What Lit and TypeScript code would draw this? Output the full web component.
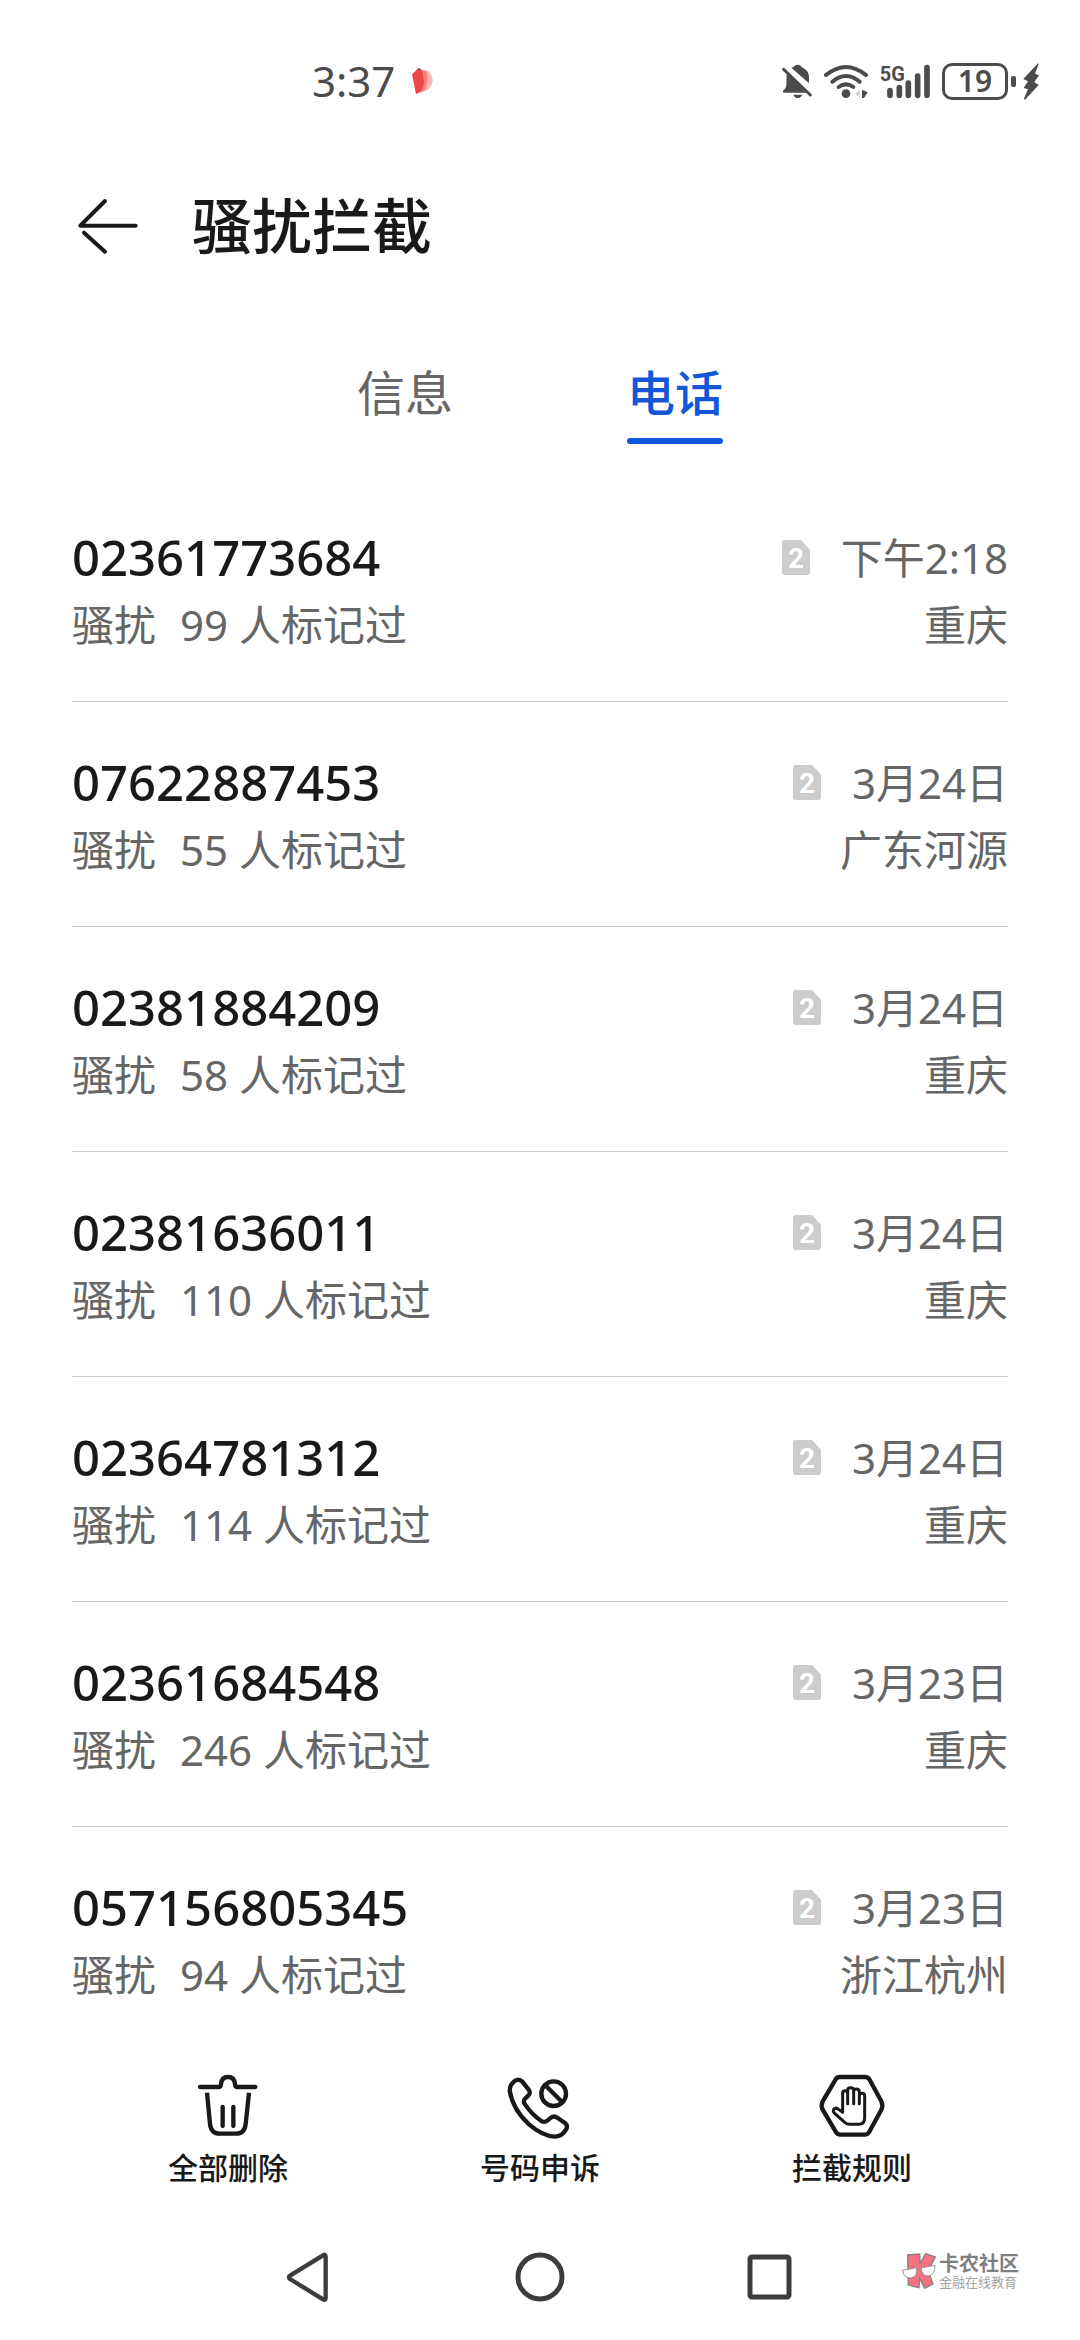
import { LitElement, html, css, svg } from "lit";
import { customElement, property, state } from "lit/decorators.js";
import { classMap } from "lit/directives/class-map.js";

interface BlockedCall {
  number: string;
  marks: number;
  time: string;
  place: string;
}

const CALLS: BlockedCall[] = [
  { number: "02361773684", marks: 99, time: "下午2:18", place: "重庆" },
  { number: "07622887453", marks: 55, time: "3月24日", place: "广东河源" },
  { number: "02381884209", marks: 58, time: "3月24日", place: "重庆" },
  { number: "02381636011", marks: 110, time: "3月24日", place: "重庆" },
  { number: "02364781312", marks: 114, time: "3月24日", place: "重庆" },
  { number: "02361684548", marks: 246, time: "3月23日", place: "重庆" },
  { number: "057156805345", marks: 94, time: "3月23日", place: "浙江杭州" },
];

const base = css`
  :host {
    display: block;
    font-family: "Noto Sans", "Noto Sans CJK SC", sans-serif;
  }
  * {
    box-sizing: border-box;
  }
  button {
    margin: 0;
    padding: 0;
    border: 0;
    background: none;
    color: inherit;
    font: inherit;
    cursor: pointer;
  }
  svg {
    display: block;
    flex: none;
  }
`;

@customElement("status-bar")
export class StatusBar extends LitElement {
  static styles = [
    base,
    css`
      .bar {
        display: flex;
        align-items: center;
        justify-content: space-between;
        height: 162px;
        padding: 0 41px 0 312px;
        color: #4b4b4b;
      }
      .left,
      .right {
        display: flex;
        align-items: center;
      }
      .left {
        gap: 16px;
        font-size: 42px;
        line-height: 60px;
      }
      .right {
        gap: 12px;
      }
      .power {
        display: flex;
        align-items: center;
        gap: 3px;
      }
      .battery {
        display: flex;
        align-items: center;
        justify-content: center;
        width: 66px;
        height: 37px;
        border: 3px solid #4b4b4b;
        border-radius: 10px;
        font-size: 30px;
        font-weight: 600;
        line-height: 32px;
      }
      .tip {
        width: 5px;
        height: 11px;
        border-radius: 2px;
        background: #4b4b4b;
      }
      .bolt {
        margin-left: 4px;
      }
      .net {
        font-family: Roboto, sans-serif;
        font-size: 60px;
        font-weight: 700;
      }
    `,
  ];

  render() {
    return html`
      <div class="bar">
        <div class="left">
          <span>3:37</span>
          <svg width="22" height="28" viewBox="363 78 66 84">
            <path d="M395 88 L412 88 Q428 102 428 120 Q424 140 408 150 L384 156 Z" fill="#f9b3b3" />
            <path d="M390 84 L408 90 Q416 108 410 128 L404 148 L380 158 Z" fill="#f58080" />
            <path d="M366 100 L387 80 L398 92 L402 125 L396 148 L378 160 Z" fill="#f04848" />
            <path d="M380 88 L387 80 L394 89 Z" fill="#a84a4a" />
          </svg>
        </div>
        <div class="right">
          <svg width="30" height="36" viewBox="66 66 90 108" fill="currentColor">
            <path d="M94 80 Q102 78 104 74 Q113 68 122 74 Q124 78 130 81 Q147 90 147 108 L147 127 Z" />
            <path d="M80 94 L141 155 L70 155 Q66 150 74 145 Q79 140 79 132 Z" />
            <path d="M100 161 L127 161 Q122 171 113 171 Q104 171 100 161 Z" />
            <path d="M71 85 L151 162" stroke="currentColor" stroke-width="9" stroke-linecap="round" />
          </svg>
          <svg width="44" height="36" viewBox="192 66 132 108" fill="none" stroke="currentColor" stroke-width="12" stroke-linecap="round">
            <path d="M198 102 Q258 54 318 102" />
            <path d="M217 122 Q258 88 299 122" />
            <path d="M236 138 Q258 122 280 138" />
            <circle cx="258" cy="158" r="13" fill="currentColor" stroke="none" />
            <path d="M299 147 L299 169 L285 158 Z" fill="#cfcfcf" stroke="none" />
            <path d="M306 146 L323 154 L312 171 L306 171 Z" fill="currentColor" stroke="none" />
          </svg>
          <svg width="50" height="36" viewBox="360 66 150 108" stroke="currentColor" stroke-width="17" stroke-linecap="round">
            <path d="M390 149 V163 M418 140 V163 M445 126 V163 M473 105 V163 M501 80 V163" />
            <text class="net" x="359" y="121" stroke="none" fill="currentColor">5G</text>
          </svg>
          <div class="power">
            <span class="battery">19</span>
            <span class="tip"></span>
            <svg class="bolt" width="16" height="37" viewBox="787 65 48 111" fill="currentColor">
              <path d="M832 66 L788 113 L802 120 L789 140 L802 144 L789 174 L793 175 L834 131 L821 122 L835 102 L823 97 L834 68 Z" />
            </svg>
          </div>
        </div>
      </div>
    `;
  }
}

@customElement("call-row")
export class CallRow extends LitElement {
  static styles = [
    base,
    css`
      .row {
        display: flex;
        flex-direction: column;
        padding: 47px 0 43px;
        border-bottom: 1px solid #cccccc;
      }
      .row.last {
        border-bottom-color: transparent;
      }
      .line {
        display: flex;
        align-items: center;
        justify-content: space-between;
        height: 67px;
        font-size: 42px;
        line-height: 67px;
        color: #666666;
        white-space: nowrap;
      }
      .number {
        font-size: 49px;
        font-weight: 500;
        color: #191919;
      }
      .when {
        display: flex;
        align-items: center;
        gap: 31px;
      }
      .tag {
        display: flex;
        gap: 24px;
      }
      .sim {
        font-family: Roboto, sans-serif;
        font-size: 84px;
        font-weight: 700;
      }
    `,
  ];

  @property({ attribute: false }) call!: BlockedCall;
  @property({ type: Boolean }) last = false;

  render() {
    const { number, marks, time, place } = this.call;
    return html`
      <div class=${classMap({ row: true, last: this.last })}>
        <div class="line">
          <span class="number">${number}</span>
          <span class="when">
            <svg width="28" height="35" viewBox="126 88 84 105">
              <path d="M134 88 H183 L210 117 V185 Q210 193 202 193 H134 Q126 193 126 185 V96 Q126 88 134 88 Z" fill="#cccccc" />
              <text class="sim" x="168" y="172" text-anchor="middle" fill="#ffffff">2</text>
            </svg>
            <span>${time}</span>
          </span>
        </div>
        <div class="line">
          <span class="tag"><span>骚扰</span><span>${marks} 人标记过</span></span>
          <span>${place}</span>
        </div>
      </div>
    `;
  }
}

const trashIcon = svg`
  <path d="M180 111 H237 Q243 111 243 102 Q245 81 264 81 Q283 81 285 102 Q285 111 291 111 H346" />
  <path d="M201 128 L210 222 Q213 251 240 251 H288 Q314 251 317 222 L327 128" stroke-linecap="butt" />
  <path d="M248 171 V228 M280 171 V228" />
`;

const phoneIcon = svg`
  <path d="M149 122 Q149 104 164 93 Q177 84 187 95 L206 119 Q213 128 205 137 L195 146 Q188 154 195 163 Q215 193 244 213 Q254 219 263 211 L273 203 Q282 196 292 203 L315 219 Q325 227 318 239 Q306 260 284 260 Q248 258 207 223 Q158 179 149 122 Z" />
  <circle cx="281" cy="131" r="37" />
  <path d="M255 105 L307 157" />
`;

const handIcon = svg`
  <path d="M210 81 H285 Q293 81 298 88 L334 154 Q340 167 334 179 L298 245 Q293 254 285 254 H210 Q202 254 197 245 L158 179 Q152 167 158 154 L197 88 Q202 81 210 81 Z" />
  <path stroke-width="9" d="M218 187 V130 Q218 122 225 122 Q233 122 233 130 V161 V121 Q233 113 242 113 Q251 113 251 121 V161 V124 Q251 117 259 117 Q268 117 268 126 V161 V137 Q268 130 276 130 Q284 130 284 138 V204 Q284 222 266 223 H239 Q231 223 225 218 L194 190 Q186 182 193 176 Q199 172 206 178 L218 187" />
`;

const ACTIONS = [
  { label: "全部删除", icon: trashIcon, box: "156 60 216 216" },
  { label: "号码申诉", icon: phoneIcon, box: "132 60 216 216" },
  { label: "拦截规则", icon: handIcon, box: "138 60 216 216" },
];

@customElement("action-bar")
export class ActionBar extends LitElement {
  static styles = [
    base,
    css`
      .bar {
        display: flex;
        padding: 18px 72px 26px;
        color: #191919;
      }
      .action {
        display: flex;
        flex: 1;
        flex-direction: column;
        align-items: center;
        gap: 6px;
        font-size: 30px;
        font-weight: 500;
        line-height: 40px;
      }
    `,
  ];

  render() {
    return html`
      <div class="bar">
        ${ACTIONS.map(
          (a) => html`
            <button class="action">
              <svg width="72" height="72" viewBox=${a.box} fill="none" stroke="currentColor" stroke-width="13" stroke-linecap="round" stroke-linejoin="round">
                ${a.icon}
              </svg>
              <span>${a.label}</span>
            </button>
          `
        )}
      </div>
    `;
  }
}

@customElement("nav-bar")
export class NavBar extends LitElement {
  static styles = [
    base,
    css`
      .bar {
        position: relative;
        display: flex;
        align-items: center;
        justify-content: center;
        gap: 170px;
        height: 126px;
        color: #3c3c3c;
      }
      .mark {
        position: absolute;
        right: 61px;
        bottom: 51px;
        display: flex;
        align-items: center;
        gap: 3px;
      }
      .words {
        display: flex;
        flex-direction: column;
      }
      .name {
        font-size: 20px;
        font-weight: 700;
        line-height: 22px;
        color: #808080;
      }
      .motto {
        font-size: 13px;
        line-height: 14px;
        color: #a2a2a2;
      }
    `,
  ];

  render() {
    return html`
      <nav class="bar">
        <button aria-label="返回">
          <svg width="60" height="60" viewBox="30 50 180 180" fill="none" stroke="currentColor" stroke-width="13" stroke-linejoin="round">
            <path d="M159 75 Q167 70 167 79 V202 Q167 211 159 207 L60 146 Q53 141 60 136 Z" />
          </svg>
        </button>
        <button aria-label="主页">
          <svg width="60" height="60" viewBox="0 0 60 60" fill="none" stroke="currentColor" stroke-width="5">
            <circle cx="30" cy="30" r="22" />
          </svg>
        </button>
        <button aria-label="最近任务">
          <svg width="60" height="60" viewBox="0 0 60 60" fill="none" stroke="currentColor" stroke-width="5">
            <rect x="10" y="10" width="39" height="40" rx="2" />
          </svg>
        </button>
        <div class="mark">
          <svg width="34" height="36" viewBox="60 67 102 108">
            <path d="M77 73 L113 70 L114 98 L131 69 L160 79 L138 120 L153 160 L128 173 L113 143 L111 171 L79 163 Z" fill="#f4717f" stroke="#8b8080" stroke-width="4" />
            <path d="M61 119 L104 111 Q107 137 88 142 Q67 145 61 119 Z" fill="#ffffff" stroke="#9a9090" stroke-width="3" />
            <path d="M117 112 L159 104 Q160 131 140 136 Q120 137 117 112 Z" fill="#ffffff" stroke="#9a9090" stroke-width="3" />
            <path d="M104 115 Q111 110 118 114" fill="none" stroke="#9a9090" stroke-width="3" />
          </svg>
          <div class="words">
            <span class="name">卡农社区</span>
            <span class="motto">金融在线教育</span>
          </div>
        </div>
      </nav>
    `;
  }
}

@customElement("app-root")
export class AppRoot extends LitElement {
  static styles = [
    base,
    css`
      .page {
        display: flex;
        flex-direction: column;
        min-height: 100vh;
        background: #ffffff;
      }
      .header {
        display: flex;
        align-items: center;
        gap: 50px;
        height: 128px;
        padding: 0 72px;
        color: #191919;
      }
      .title {
        margin: 0;
        font-size: 60px;
        font-weight: 500;
        line-height: 80px;
      }
      .tabs {
        display: flex;
        justify-content: center;
        gap: 174px;
        padding: 71px 0 33px;
      }
      .tab {
        display: flex;
        flex-direction: column;
        gap: 13px;
        font-size: 48px;
        line-height: 64px;
        color: #666666;
      }
      .tab.active {
        color: #1456d8;
        font-weight: 500;
      }
      .underline {
        width: 100%;
        height: 6px;
        border-radius: 3px;
      }
      .active .underline {
        background: #0f56e0;
      }
      .list {
        flex: 1;
        margin: 0;
        padding: 0 72px;
        list-style: none;
      }
    `,
  ];

  @state() private tab = 1;

  render() {
    return html`
      <div class="page">
        <status-bar></status-bar>
        <header class="header">
          <button aria-label="返回">
            <svg width="70" height="60" viewBox="66 74 210 180" fill="none" stroke="currentColor" stroke-width="12" stroke-linecap="round" stroke-linejoin="round">
              <path d="M165 89 L91 163 H257 M102 184 L165 241" />
            </svg>
          </button>
          <h1 class="title">骚扰拦截</h1>
        </header>
        <div class="tabs" role="tablist">
          ${["信息", "电话"].map(
            (name, i) => html`
              <button
                role="tab"
                aria-selected=${this.tab === i ? "true" : "false"}
                class=${classMap({ tab: true, active: this.tab === i })}
                @click=${() => (this.tab = i)}
              >
                <span>${name}</span>
                <span class="underline"></span>
              </button>
            `
          )}
        </div>
        <ul class="list">
          ${CALLS.map(
            (call, i) => html`<li><call-row .call=${call} ?last=${i === CALLS.length - 1}></call-row></li>`
          )}
        </ul>
        <action-bar></action-bar>
        <nav-bar></nav-bar>
      </div>
    `;
  }
}
